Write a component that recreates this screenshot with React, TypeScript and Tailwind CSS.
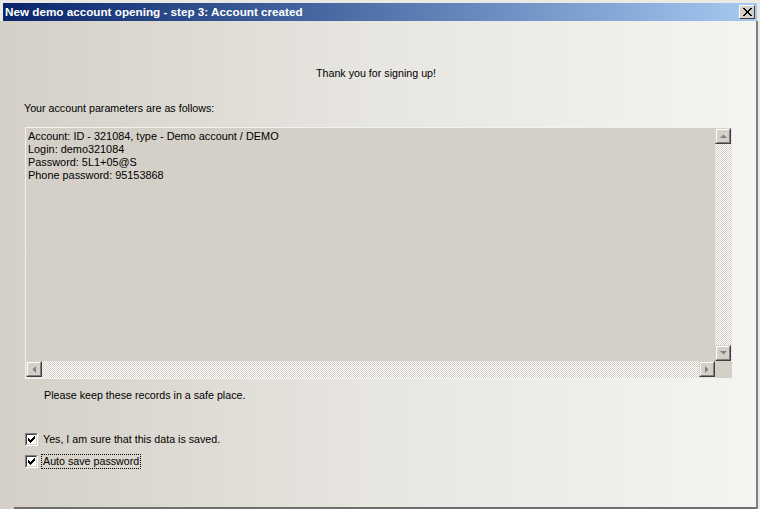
import React from "react";

const font = { fontFamily: '"Liberation Sans", Arial, sans-serif' };

function Btn({ children, className = "" }: { children: React.ReactNode; className?: string }) {
  return (
    <div
      className={
        "w-[16px] h-[16px] bg-[#d4d0c8] border border-t-[#d4d0c8] border-l-[#d4d0c8] border-r-[#404040] border-b-[#404040] flex items-center justify-center shrink-0 " +
        className
      }
    >
      <div className="w-full h-full border border-t-white border-l-white border-r-[#808080] border-b-[#808080] flex items-center justify-center">
        {children}
      </div>
    </div>
  );
}

function Tri({ dir }: { dir: "up" | "down" | "left" | "right" }) {
  const p: Record<string, string> = {
    up: "0,4 7,4 3.5,0.5",
    down: "0,0 7,0 3.5,3.5",
    left: "4,0 4,7 0.5,3.5",
    right: "0,0 0,7 3.5,3.5",
  };
  const w = dir === "up" || dir === "down" ? 7 : 4;
  const h = dir === "up" || dir === "down" ? 4 : 7;
  return (
    <svg width={w} height={h} viewBox={`0 0 ${w} ${h}`}>
      <polygon points={p[dir]} fill="#808080" />
    </svg>
  );
}

function Check({ label, focus = false }: { label: string; focus?: boolean }) {
  return (
    <div className="flex items-center h-[13px]">
      <div className="w-[13px] h-[13px] border border-t-[#808080] border-l-[#808080] border-r-white border-b-white">
        <div className="w-full h-full border border-t-[#404040] border-l-[#404040] border-r-[#d4d0c8] border-b-[#d4d0c8] bg-white flex items-center justify-center">
          <svg width="7" height="7" viewBox="0 0 7 7" shapeRendering="crispEdges">
            <path d="M0 2h1v1h1v1h1V3h1V2h1V1h1V0h1v3H6v1H5v1H4v1H3v1H2V6H1V5H0z" fill="#000" />
          </svg>
        </div>
      </div>
      <span
        className={
          "ml-[3px] text-[10.7px] leading-[13px] text-black px-[1px] " +
          (focus ? "border border-dotted border-black" : "border border-transparent")
        }
      >
        {label}
      </span>
    </div>
  );
}

export default function App() {
  const checker =
    "bg-[repeating-conic-gradient(#d4d0c8_0_25%,#ffffff_0_50%)] bg-[length:2px_2px]";
  return (
    <div
      className="w-[760px] h-[509px] overflow-hidden bg-[#ece9e4] flex flex-col pt-[3px] pl-[3px] pr-[3px]"
      style={font}
    >
      <div className="h-[18px] flex items-center justify-between bg-gradient-to-r from-[#0a246a] to-[#a6caf0] pl-[2px] pr-[2px]">
        <span className="text-white font-bold text-[11.7px] leading-[14px]">
          New demo account opening - step 3: Account created
        </span>
        <div className="w-[16px] h-[14px] bg-[#d4d0c8] border border-t-white border-l-white border-r-[#404040] border-b-[#404040] flex items-center justify-center">
          <svg width="9" height="8" viewBox="0 0 9 8" shapeRendering="crispEdges">
            <path d="M0 0h2l2.5 3 2.5-3h2L5.5 4 9 8H7L4.5 5 2 8H0l3.5-4z" fill="#000" />
          </svg>
        </div>
      </div>
      <div className="flex-1 -ml-[3px] -mr-[1px] flex flex-col bg-gradient-to-r from-[#d4d0c8] via-[#e8e6e1] to-[#f4f4f2] border-r-2 border-r-[#7f7f7f] text-[10.7px] leading-[13px] text-black">
        <div className="mt-[46px] text-center pr-[4px]">Thank you for signing up!</div>
        <div className="mt-[22px] ml-[24px]">Your account parameters are as follows:</div>
        <div className="mt-[12px] ml-[25px] w-[708px] h-[252px] border border-[#f2f2f0] flex flex-col">
          <div className="flex flex-1 min-h-0">
            <div className="flex-1 bg-[#d4d0c8] pl-[2px] pt-[2px] text-[10.9px] leading-[13px]">
              <div>Account: ID - 321084, type - Demo account / DEMO</div>
              <div>Login: demo321084</div>
              <div>Password: 5L1+05@S</div>
              <div>Phone password: 95153868</div>
            </div>
            <div className={"w-[17px] flex flex-col justify-between " + checker}>
              <Btn>
                <Tri dir="up" />
              </Btn>
              <Btn>
                <Tri dir="down" />
              </Btn>
            </div>
          </div>
          <div className="flex h-[17px]">
            <div className={"flex-1 flex justify-between " + checker}>
              <Btn>
                <Tri dir="left" />
              </Btn>
              <Btn>
                <Tri dir="right" />
              </Btn>
            </div>
            <div className="w-[17px] bg-[#d4d0c8]" />
          </div>
        </div>
        <div className="mt-[10px] ml-[44px]">Please keep these records in a safe place.</div>
        <div className="mt-[31px] ml-[25px] flex flex-col gap-[9px]">
          <Check label="Yes, I am sure that this data is saved." />
          <Check label="Auto save password" focus />
        </div>
        <div className="flex-1" />
        <div className="h-[2px] ml-[14px] bg-[#6f6f6f]" />
      </div>
    </div>
  );
}
